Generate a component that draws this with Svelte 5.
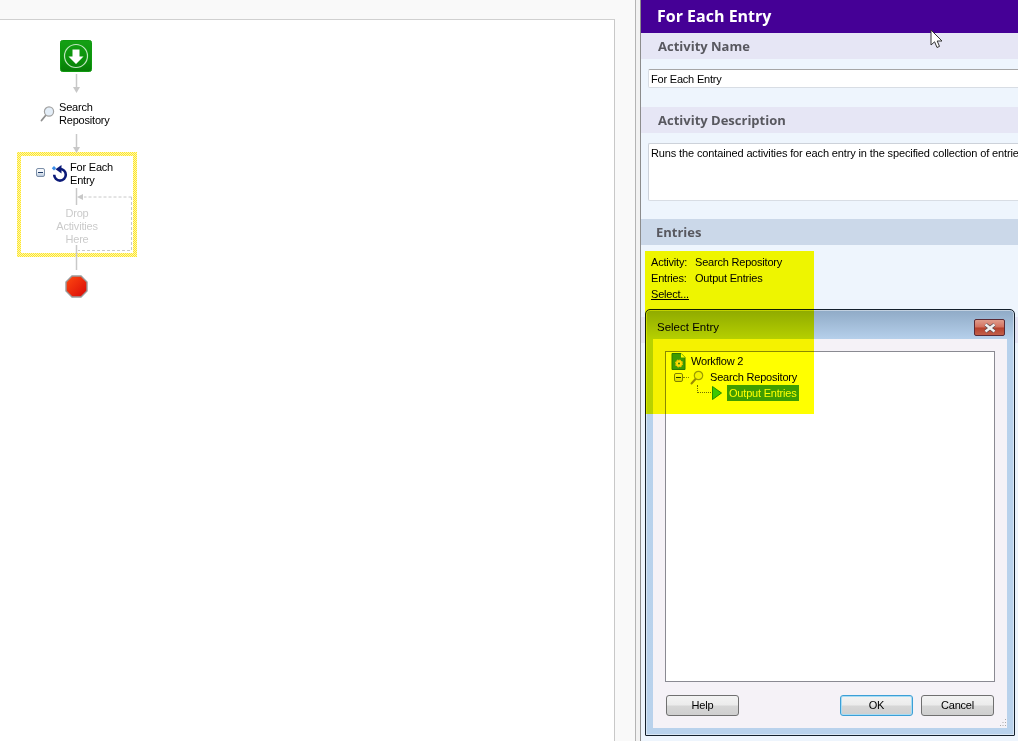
<script>
	const entryRows = [
		{ label: 'Activity:', value: 'Search Repository' },
		{ label: 'Entries:', value: 'Output Entries' }
	];
</script>

<div class="page">
	<div class="workspace">
		<div class="canvas">
			<svg class="wires" width="160" height="310" viewBox="0 0 160 310" aria-hidden="true">
				<g fill="none" stroke="#c8c8c8" stroke-width="1.5">
					<path d="M76.5 74V87" />
					<path d="M76.5 134V147" />
					<path d="M76.5 188V205" />
					<path d="M76.5 245V270" />
				</g>
				<g fill="none" stroke="#c8c8c8" stroke-dasharray="3 2">
					<path d="M131.5 197H84" />
					<path d="M131.5 197V250.5H78" />
				</g>
				<g fill="#c8c8c8">
					<path d="M73 87H80L76.5 93Z" />
					<path d="M73 147H80L76.5 153Z" />
					<path d="M83 194V200L77 197Z" />
				</g>
			</svg>

			<div class="node start">
				<svg width="32" height="32" viewBox="0 0 32 32" aria-hidden="true">
					<defs>
						<linearGradient id="startFill" x1="0" y1="0" x2="0" y2="1">
							<stop offset="0" stop-color="#14a014" />
							<stop offset="0.6" stop-color="#0c920c" />
							<stop offset="1" stop-color="#067c06" />
						</linearGradient>
					</defs>
					<rect x="0.5" y="0.5" width="31" height="31" rx="2" fill="url(#startFill)" stroke="#109a10" />
					<circle cx="16" cy="16" r="11.500" fill="none" stroke="#bfe6bf" stroke-width="1.2" />
					<path d="M12.500 9.500H19.500V16.500H23.500L16 24L8.500 16.500H12.500Z" fill="#fff" />
				</svg>
			</div>

			<svg class="node lens" width="15" height="17" viewBox="0 0 15 17" aria-hidden="true">
				<path d="M1.500 15.500L6 10" stroke="#8f8f8f" stroke-width="1.800" stroke-linecap="round" />
				<circle cx="9" cy="6.500" r="4.600" fill="#e4eef8" stroke="#a2a2a2" stroke-width="1.200" />
			</svg>
			<div class="node label search">Search<br />Repository</div>

			<div class="node loop-box"></div>
			<div class="node minus loop-minus"></div>
			<svg class="node loop-icon" width="19" height="19" viewBox="0 0 19 19" aria-hidden="true">
				<path d="M9 4A5.800 5.800 0 1 1 3.200 9.800" fill="none" stroke="#0b1a78" stroke-width="2.600" />
				<path d="M10.500 0V8.500L4.500 4.200Z" fill="#0b1a78" />
				<path d="M3 1L5.200 3.200L3 5.400L0.800 3.200Z" fill="#3c8fe8" />
			</svg>
			<div class="node label foreach">For Each<br />Entry</div>
			<div class="node label drop">Drop<br />Activities<br />Here</div>

			<svg class="node stop" width="23" height="23" viewBox="0 0 23 23" aria-hidden="true">
				<defs>
					<linearGradient id="stopFill" x1="0" y1="0" x2="1" y2="1">
						<stop offset="0" stop-color="#ff4a10" />
						<stop offset="1" stop-color="#d80808" />
					</linearGradient>
				</defs>
				<path d="M7 1H16L22 7V16L16 22H7L1 16V7Z" fill="url(#stopFill)" stroke="#9a9a9a" stroke-width="1.400" />
			</svg>
		</div>
		<div class="divider"></div>
	</div>

	<div class="panel">
		<h1>For Each Entry</h1>

		<h2>Activity Name</h2>
		<div class="body name-body">
			<div class="field">For Each Entry</div>
		</div>

		<h2>Activity Description</h2>
		<div class="body desc-body">
			<div class="field area">Runs the contained activities for each entry in the specified collection of entries.</div>
		</div>

		<h2 class="entries-title">Entries</h2>
		<div class="body entries-body">
			{#each entryRows as row}
				<div class="row"><span class="row-label">{row.label}</span><span>{row.value}</span></div>
			{/each}
			<div class="row"><span class="select-link">Select...</span></div>
		</div>

		<div class="behind-bar"></div>
		<div class="body rest"></div>
	</div>

	<div class="dialog">
		<div class="titlebar">
			<span>Select Entry</span>
			<div class="close">
				<svg width="14" height="10" viewBox="0 0 14 10" aria-hidden="true">
					<path d="M2.500 1.500L11.500 8.500M11.500 1.500L2.500 8.500" stroke="#5a4a50" stroke-width="3.800" />
					<path d="M2.500 1.500L11.500 8.500M11.500 1.500L2.500 8.500" stroke="#f2f2f2" stroke-width="2.400" />
				</svg>
			</div>
		</div>
		<div class="dialog-body">
			<div class="tree">
				<div class="tree-row">
					<svg class="doc" width="15" height="17" viewBox="0 0 15 17" aria-hidden="true">
						<path d="M1 0.500H10L14 4.500V16.500H1Z" fill="#3f9c22" stroke="#2c7a18" />
						<path d="M10 0.500V4.500H14Z" fill="#fff" />
						<circle cx="8" cy="10.500" r="3.200" fill="#ffe23a" stroke="#f4c400" stroke-dasharray="1.500 1" stroke-width="1.600" />
						<circle cx="8" cy="10.500" r="1" fill="#2c7a18" />
					</svg>
					<span class="tree-text">Workflow 2</span>
				</div>
				<div class="tree-row second">
					<div class="minus tree-minus"></div>
					<span class="dots-h"></span>
					<svg class="tree-lens" width="14" height="15" viewBox="0 0 14 15" aria-hidden="true">
						<path d="M1.500 13.500L5.500 9" stroke="#9a8a40" stroke-width="2" stroke-linecap="round" />
						<circle cx="8.500" cy="5.500" r="4.200" fill="#f4f4a0" stroke="#9c9c40" stroke-width="1.200" />
					</svg>
					<span class="tree-text">Search Repository</span>
				</div>
				<div class="tree-row third">
					<span class="dots-corner"></span>
					<svg class="play" width="10" height="14" viewBox="0 0 10 14" aria-hidden="true">
						<path d="M0.500 0.500L9.500 7L0.500 13.500Z" fill="#3cc83c" stroke="#1f8f1f" />
					</svg>
					<span class="selected">Output Entries</span>
				</div>
			</div>
			<div class="actions">
				<button>Help</button>
				<span class="spacer"></span>
				<button class="default">OK</button>
				<button>Cancel</button>
			</div>
			<svg class="grip" width="9" height="9" viewBox="0 0 9 9" aria-hidden="true">
				<path d="M7 1h1v1H7zM4.500 4h1v1h-1zM7 4h1v1H7zM2 7h1v1H2zM4.500 7h1v1h-1zM7 7h1v1H7z" fill="#a9a9a9" />
			</svg>
		</div>
	</div>

	<div class="marker"></div>

	<svg class="cursor" width="14" height="20" viewBox="0 0 14 20" aria-hidden="true">
		<path d="M1 1V16L4.600 12.800L7 18.500L9.500 17.400L7.200 12H12Z" fill="#fff" stroke="#333" />
	</svg>
</div>

<style>
	:global(body) {
		margin: 0;
		overflow: hidden;
	}

	.page {
		position: relative;
		display: grid;
		grid-template-columns: 641px 1fr;
		width: 1018px;
		height: 741px;
		overflow: hidden;
		background: #f9f9f9;
		color: #000;
		font-family: 'Liberation Sans', Arial, sans-serif;
		font-size: 11px;
		letter-spacing: -0.2px;
		line-height: 13px;
	}

	.workspace {
		display: grid;
		grid-template-columns: 615px 1fr;
		padding-top: 19px;
	}

	.canvas {
		position: relative;
		background: #fff;
		border-top: 1px solid #d0d0d0;
		border-right: 1px solid #c8c8c8;
	}

	.divider {
		margin: -19px 0 0 20px;
		border-left: 1px solid #b4b4b4;
		border-right: 1px solid #8c8c8c;
		background: #f2f2f2;
		width: 4px;
	}

	/* diagram nodes sit on a free canvas, offsets are relative to it */
	.wires {
		position: absolute;
		left: 0;
		top: -20px;
		z-index: 1;
	}

	.node {
		position: absolute;
	}

	.start {
		left: 60px;
		top: 20px;
		width: 32px;
		height: 32px;
	}

	.lens {
		left: 40px;
		top: 85px;
	}

	.label {
		white-space: nowrap;
	}

	.search {
		left: 59px;
		top: 81px;
	}

	.loop-box {
		left: 17px;
		top: 132px;
		width: 120px;
		height: 105px;
		background: repeating-conic-gradient(#fde62a 0 25%, #fff7b0 0 50%) 0 0 / 2px 2px;
	}

	.loop-box::before {
		content: '';
		position: absolute;
		inset: 4px;
		background: #fff;
	}

	.minus {
		box-sizing: border-box;
		width: 9px;
		height: 9px;
		border: 1px solid #7c8fa8;
		border-radius: 2px;
		background: linear-gradient(#f4f7fb 40%, #b9c9dd);
		display: flex;
		align-items: center;
		justify-content: center;
	}

	.minus::after {
		content: '';
		width: 5px;
		height: 1px;
		background: #1e3a66;
	}

	.loop-minus {
		left: 36px;
		top: 148px;
	}

	.loop-icon {
		left: 51px;
		top: 145px;
	}

	.foreach {
		left: 70px;
		top: 141px;
	}

	.drop {
		left: 37px;
		width: 80px;
		top: 187px;
		color: #cbcbcb;
		text-align: center;
		z-index: 2;
	}

	.stop {
		left: 65px;
		top: 255px;
		z-index: 2;
	}

	.panel {
		display: flex;
		flex-direction: column;
		min-width: 0;
		background: #eef5fd;
	}

	h1 {
		margin: 0;
		height: 33px;
		padding-left: 16px;
		background: #450096;
		color: #fff;
		font-family: 'Open Sans', sans-serif;
		font-size: 16px;
		font-weight: 700;
		letter-spacing: 0;
		line-height: 33px;
	}

	h2 {
		margin: 0;
		height: 26px;
		padding-left: 17px;
		background: #e6e6f5;
		color: #58585f;
		font-family: 'Open Sans', sans-serif;
		font-size: 13px;
		font-weight: 700;
		letter-spacing: 0;
		line-height: 26px;
	}

	.entries-title {
		padding-left: 15px;
		background: #cbd8e9;
	}

	.body {
		padding-left: 7px;
	}

	.name-body {
		height: 48px;
		padding-top: 10px;
		box-sizing: border-box;
	}

	.desc-body {
		height: 86px;
		padding-top: 10px;
		box-sizing: border-box;
	}

	.field {
		box-sizing: border-box;
		width: 400px;
		height: 19px;
		padding: 3px 0 0 2px;
		border: 1px solid #d8dde4;
		border-top-color: #a6a6a6;
		border-radius: 2px;
		background: #fff;
		white-space: nowrap;
		overflow: hidden;
	}

	.area {
		height: 58px;
		border-top-color: #cdd2da;
		border-left-color: #cdd2da;
		letter-spacing: -0.13px;
	}

	.entries-body {
		box-sizing: border-box;
		height: 72px;
		padding: 10px 0 0 10px;
	}

	.row {
		display: flex;
		height: 16px;
		line-height: 14px;
	}

	.row-label {
		width: 44px;
	}

	.select-link {
		text-decoration: underline;
	}

	.behind-bar {
		height: 26px;
		background: #e6e6f5;
	}

	.rest {
		flex: 1;
	}

	/* the dialog floats above the property panel */
	.dialog {
		position: absolute;
		left: 645px;
		top: 309px;
		box-sizing: border-box;
		width: 370px;
		height: 427px;
		padding: 0 7px 7px;
		border: 1px solid #14202c;
		border-radius: 5px 5px 1px 1px;
		background: linear-gradient(#8faac6 0, #b7d1ec 30px, #b9d2ec 100%);
		box-shadow: inset 0 0 0 1px rgba(255, 255, 255, 0.45);
		display: flex;
		flex-direction: column;
	}

	.titlebar {
		flex: none;
		height: 29px;
		display: flex;
		align-items: flex-start;
		justify-content: space-between;
		padding: 11px 0 0 4px;
		box-sizing: border-box;
		font-size: 11.5px;
		letter-spacing: 0;
	}

	.close {
		width: 31px;
		height: 17px;
		box-sizing: border-box;
		margin: -2px 2px 0 0;
		border: 1px solid #5b2a35;
		border-radius: 2px;
		background: linear-gradient(#e09c8c 0, #d2705e 48%, #b5402c 52%, #c2604a 100%);
		display: flex;
		align-items: center;
		justify-content: center;
	}

	.dialog-body {
		position: relative;
		flex: 1;
		background: #f5f2f7;
		padding: 12px 12px 0;
		display: flex;
		flex-direction: column;
	}

	.tree {
		box-sizing: border-box;
		height: 331px;
		border: 1px solid #8a8a92;
		background: #fff;
		padding: 1px 0 0 5px;
	}

	.tree-row {
		display: flex;
		align-items: center;
		height: 16px;
		position: relative;
	}

	.tree-text {
		margin-left: 5px;
		white-space: nowrap;
	}

	.doc {
		flex: none;
	}

	.second {
		padding-left: 3px;
	}

	.second .tree-text {
		margin-left: 6px;
	}

	.tree-minus {
		flex: none;
		border-color: #808080;
		background: linear-gradient(#fff, #ddd);
	}

	.dots-h {
		width: 6px;
		border-top: 1px dotted #808080;
	}

	.tree-lens {
		flex: none;
		margin-left: 1px;
	}

	.third {
		padding-left: 26px;
	}

	.dots-corner {
		width: 13px;
		height: 7px;
		margin-top: -9px;
		border-left: 1px dotted #707070;
		border-bottom: 1px dotted #707070;
	}

	.play {
		flex: none;
		margin-left: 1px;
	}

	.selected {
		margin-left: 5px;
		padding: 0 2px;
		height: 16px;
		line-height: 16px;
		background: #3f9e00;
		color: #fff;
		white-space: nowrap;
	}

	.actions {
		display: flex;
		gap: 8px;
		margin-top: 13px;
		padding: 0 1px;
	}

	.spacer {
		flex: 1;
	}

	button {
		box-sizing: border-box;
		width: 73px;
		height: 21px;
		padding: 0;
		border: 1px solid #707070;
		border-radius: 3px;
		background: linear-gradient(#f3f3f3 0, #ebebeb 48%, #d6d6d6 52%, #cfcfcf 100%);
		color: #000;
		font: inherit;
		letter-spacing: inherit;
	}

	.default {
		border-color: #3c9fd6;
		box-shadow: inset 0 0 0 1px #a8dcf4;
	}

	.grip {
		position: absolute;
		right: 0;
		bottom: 1px;
	}

	/* highlighter mark painted over the screenshot */
	.marker {
		position: absolute;
		left: 645px;
		top: 251px;
		width: 169px;
		height: 163px;
		background: #ffff00;
		mix-blend-mode: multiply;
		pointer-events: none;
	}

	.cursor {
		position: absolute;
		left: 930px;
		top: 29px;
	}
</style>
